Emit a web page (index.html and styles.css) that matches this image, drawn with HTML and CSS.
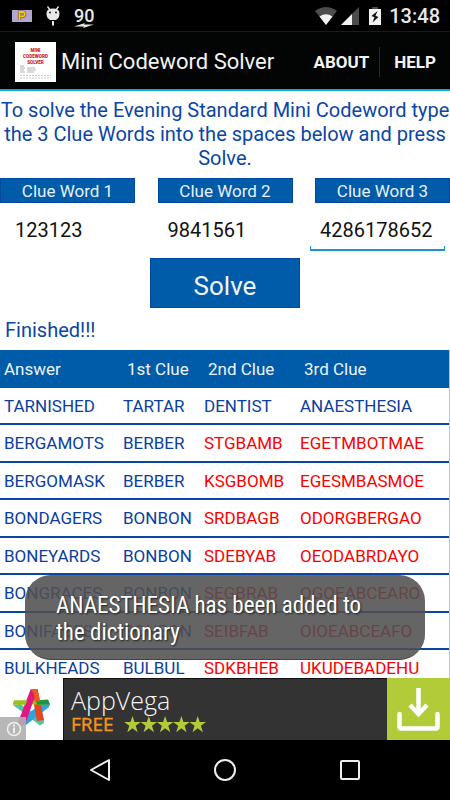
FILE: index.html
```html
<!DOCTYPE html>
<html lang="en">
<head>
<meta charset="utf-8">
<meta name="viewport" content="width=device-width, initial-scale=1">
<title>Mini Codeword Solver</title>
<link rel="stylesheet" href="styles.css">
</head>
<body>
<div class="screen">
  <div class="status">
    <div class="status-group">
      <svg class="ic-p" width="20" height="12" viewBox="0 0 20 12"><rect width="20" height="12" fill="#b3a5cf"/><path d="M7.500 10V2h3.200q2 0 2 2.200t-2 2.200H8.500" fill="none" stroke="#7d5a35" stroke-width="3.200"/><path d="M7.500 10V2h3.200q2 0 2 2.200t-2 2.200H8.500" fill="none" stroke="#f0c818" stroke-width="1.800"/></svg>
      <svg class="ic-bug" width="14" height="20" viewBox="0 0 14 20"><path d="M1.500 .5L4 4M12.500 .5L10 4" stroke="#e8e8e8" stroke-width="1.300"/><path d="M.5 7.500Q.5 2.500 7 2.500t6.500 5Q13.500 12 10 14H4Q.5 12 .5 7.500z" fill="#e8e8e8"/><path d="M7 15v4.500" stroke="#e8e8e8" stroke-width="2"/><circle cx="4" cy="6.500" r="1" fill="#222"/><circle cx="10" cy="6.500" r="1" fill="#222"/></svg>
      <span class="percent">90<svg width="20" height="5" viewBox="0 0 20 5"><path d="M0 3.500L11 0l-1 1.500h10L9 5l1-1.500z" fill="#e8e8e8"/></svg></span>
    </div>
    <div class="status-group">
      <svg width="22" height="18" viewBox="0 0 22 18"><path d="M0 4Q11-4 22 4L11 18z" fill="#4c4c4c"/><path d="M4.500 9.500Q11 5 17.500 9.500L11 18z" fill="#f2f2f2"/></svg>
      <svg class="ic-cell" width="18" height="18" viewBox="0 0 18 18"><path d="M18 0v18H0z" fill="#4c4c4c"/><path d="M11 7v11H0z" fill="#f2f2f2"/></svg>
      <svg class="ic-batt" width="12" height="18" viewBox="0 0 12 18"><path d="M3 0h6v2H3z" fill="#4c4c4c"/><path d="M0 2h12v16H0z" fill="#f2f2f2"/><path d="M8.500 4L2.500 9l3 1.300L3.500 15.500l6-5.500-3-1.200z" fill="#111"/></svg>
      <span class="clock">13:48</span>
    </div>
  </div>

  <header class="bar">
    <svg class="logo" width="41" height="40" viewBox="0 0 41 40"><rect width="41" height="40" fill="#fff"/><g fill="#c8202a" font-family="Roboto, sans-serif" font-weight="900" font-size="4.600" text-anchor="middle"><text x="20.500" y="9.500">MINI</text><text x="20.500" y="15.500">CODEWORD</text><text x="20.500" y="21.700">SOLVER</text></g><path d="M5 24h4M5 26h5M12 26h8M5 28h4M12 28h9M5 30h5M12 30h7" stroke="#aaa" stroke-width=".9"/><path d="M5 33.500h31M5 36h31" stroke="#bbb" stroke-width=".8" stroke-dasharray="2 1"/></svg>
    <h1>Mini Codeword Solver</h1>
    <nav class="menu"><button type="button">ABOUT</button><button type="button">HELP</button></nav>
  </header>

  <main>
    <form class="solver">
      <p class="intro">To solve the Evening Standard Mini Codeword type the 3 Clue Words into the spaces below and press Solve.</p>
      <div class="labels">
        <label for="c1">Clue Word 1</label><label for="c2">Clue Word 2</label><label for="c3">Clue Word 3</label>
      </div>
      <div class="fields">
        <input id="c1" value="123123"><input id="c2" value="9841561"><span class="focused"><input id="c3" value="4286178652"></span>
      </div>
      <button class="solve" type="button">Solve</button>
      <output class="result">Finished!!!</output>
    </form>
    <table>
      <thead><tr><th class="c-answer">Answer</th><th class="c-first">1st Clue</th><th class="c-second">2nd Clue</th><th>3rd Clue</th></tr></thead>
      <tbody>
        <tr class="hit"><td>TARNISHED</td><td>TARTAR</td><td>DENTIST</td><td>ANAESTHESIA</td></tr>
        <tr><td>BERGAMOTS</td><td>BERBER</td><td>STGBAMB</td><td>EGETMBOTMAE</td></tr>
        <tr><td>BERGOMASK</td><td>BERBER</td><td>KSGBOMB</td><td>EGESMBASMOE</td></tr>
        <tr><td>BONDAGERS</td><td>BONBON</td><td>SRDBAGB</td><td>ODORGBERGAO</td></tr>
        <tr><td>BONEYARDS</td><td>BONBON</td><td>SDEBYAB</td><td>OEODABRDAYO</td></tr>
        <tr><td>BONGRACES</td><td>BONBON</td><td>SEGBRAB</td><td>OGOEABCEARO</td></tr>
        <tr><td>BONIFACES</td><td>BONBON</td><td>SEIBFAB</td><td>OIOEABCEAFO</td></tr>
        <tr><td>BULKHEADS</td><td>BULBUL</td><td>SDKBHEB</td><td>UKUDEBADEHU</td></tr>
      </tbody>
    </table>
    <div class="toast" role="status">ANAESTHESIA has been added to the dictionary</div>
  </main>

  <a class="ad" href="#">
    <span class="ad-logo">
      <svg width="40" height="40" viewBox="0 0 40 40"><path d="M2 17l7-1 24 15v4l-4 2.500z" fill="#5bbfa9"/><path d="M34 13l5 3-1 3L15 37l-6-2 2-5z" fill="#2ea3dc"/><path d="M20 1h6.500L33 32l-7 1z" fill="#e6451f"/><path d="M3 12.500h34l2 4H2z" fill="#97c31c"/><path d="M25 12.500l12-1 2 5H26z" fill="#1e9447"/><path d="M19.500 1.500L25 5 14 37l-5 .5-2-3z" fill="#e0187f"/><path d="M19.500 1h7l2.500 12-5 1-1-8z" fill="#ec5a1c"/><path d="M3 12.500h13l-1 4H2z" fill="#97c31c"/></svg>
      <svg class="info" width="26" height="23" viewBox="0 0 26 23"><rect width="26" height="23" fill="#b0b0b0"/><circle cx="14" cy="12" r="6.500" fill="none" stroke="#eee" stroke-width="1.500"/><path d="M14 10.500v5.500M14 7.500v2" stroke="#eee" stroke-width="2"/></svg>
    </span>
    <span class="ad-text">
      <span class="ad-title">AppVega</span>
      <span class="ad-sub">FREE
        <svg width="82" height="17" viewBox="0 0 82 17" fill="#b2cc39"><defs><path id="star" d="M8.500 0l2 6h6.300l-5.100 3.800 2 6.400-5.200-3.900-5.200 3.900 2-6.400L.2 6h6.300z"/></defs><use href="#star"/><use href="#star" x="16.300"/><use href="#star" x="32.600"/><use href="#star" x="48.900"/><use href="#star" x="65.200"/></svg>
      </span>
    </span>
    <span class="ad-get">
      <svg width="43" height="43" viewBox="0 0 43 43" fill="none" stroke="#fff"><path d="M2.500 26V38.500q0 2 2 2h34q2 0 2-2V26" stroke-width="4.500" stroke-linecap="round"/><path d="M21.500 0v25" stroke-width="4.500"/><path d="M13 17l8.500 9L30 17" stroke-width="4.500"/></svg>
    </span>
  </a>

  <nav class="navbar">
    <button type="button" aria-label="Back"><svg width="24" height="26" viewBox="0 0 24 26"><path d="M3 13L21 3v20z"/></svg></button>
    <button type="button" aria-label="Home"><svg width="24" height="26" viewBox="0 0 24 26"><circle cx="12" cy="13" r="10"/></svg></button>
    <button type="button" aria-label="Recents"><svg width="24" height="26" viewBox="0 0 24 26"><rect x="3" y="4" width="18" height="18" rx="1"/></svg></button>
  </nav>
</div>
</body>
</html>
```
FILE: styles.css
```css
* { box-sizing: border-box; }
body { margin: 0; background: #fff; font-family: Roboto, sans-serif; }
button, input { font: inherit; }
button { border: 0; padding: 0; background: none; color: inherit; }
svg { display: block; flex: none; }

.screen { height: 100vh; display: flex; flex-direction: column; overflow: hidden; }

.status { display: flex; justify-content: space-between; flex: none; height: 32px; padding: 0 10px 0 12px; background: #000; border-bottom: 1px solid #1c1c1c; color: #e8e8e8; }
.status-group { display: flex; align-items: center; }
.ic-bug { margin: 0 14px; }
.percent { padding-top: 4px; font-size: 18px; line-height: 15px; font-weight: 500; }
.ic-cell { margin: 0 10px 0 4px; }
.clock { margin-left: 8px; font-size: 20px; line-height: 32px; font-weight: 500; }

.bar { display: flex; align-items: center; flex: none; height: 59px; padding: 2px 14px 0 15px; background: #030505; border-bottom: 2px solid #0aa9e0; color: #f3f3f3; }
.bar h1 { margin: 0 0 0 5px; flex: 1; font-size: 22px; font-weight: 400; white-space: nowrap; }
.menu { display: flex; font-size: 17px; font-weight: 700; }
.menu button { height: 30px; }
.menu button + button { margin-left: 10px; padding-left: 14px; border-left: 1px solid #2b2d2d; }

main { position: relative; flex: 1; min-height: 0; overflow: hidden; }
.solver { display: flex; flex-direction: column; }
.intro { margin: 7px 0 8px; color: #0a46a5; font-size: 20px; line-height: 24px; text-align: center; }
.labels { display: grid; grid-template-columns: repeat(3, 1fr); column-gap: 5%; }
.labels label { height: 25px; background: #005ba9; border: 1px solid #0048a4; color: #e9f0fa; font-size: 17px; line-height: 24px; text-align: center; }
.fields { display: grid; grid-template-columns: repeat(3, 1fr); column-gap: 4%; padding: 0 5px; height: 48px; }
.fields input { width: 100%; height: 48px; padding: 6px 10px 0; border: 0; outline: 0; background: none; color: #111; font-size: 20px; }
.focused { height: 48px; background: linear-gradient(#1f93cf, #1f93cf) bottom / 100% 2px no-repeat, linear-gradient(#1f93cf, #1f93cf) left bottom / 1px 5px no-repeat, linear-gradient(#1f93cf, #1f93cf) right bottom / 1px 5px no-repeat; }
.solve { align-self: center; width: 33.333%; height: 50px; margin-top: 7px; padding-top: 6px; background: #005ba9; border: 1px solid #0048a4; color: #f0f5fc; font-size: 26px; }
.result { padding: 10px 5px 8px; color: #0a46a5; font-size: 20px; line-height: 24px; }

table { width: 100%; border-collapse: separate; border-spacing: 0; table-layout: fixed; border-right: 1px solid #b5c3e4; color: #0a3ea0; font-size: 17px; }
.c-answer { width: 119px; }
.c-first { width: 81px; }
.c-second { width: 96px; }
tr { height: 37px; }
tbody tr:nth-child(even), thead tr { height: 38px; }
th, td { padding: 0 0 0 4px; text-align: left; font-weight: 400; white-space: nowrap; }
td { border-bottom: 2px solid #0a46a5; }
th { background: #005ba9; color: #eef3fb; }
th + th { padding-left: 8px; }
tr:not(.hit) td:nth-child(n+3) { color: #fb0000; }

.toast { position: absolute; left: 25px; right: 25px; bottom: 18px; padding: 17px 40px 13px 31px; border-radius: 26px; background: rgba(80, 80, 80, .88); border-bottom: 1px solid #444; color: #fff; font-family: "Roboto Condensed", Roboto, sans-serif; font-size: 23px; line-height: 27px; text-shadow: 1px 1px 2px #222; }

.ad { display: flex; flex: none; height: 62px; background: #333; text-decoration: none; font-family: "Open Sans", sans-serif; }
.ad-logo { position: relative; display: flex; width: 63px; padding: 10px 11px; background: #fff; }
.info { position: absolute; left: 0; bottom: 0; opacity: .9; }
.ad-text { flex: 1; padding: 5px 7px 0; border-top: 1px solid #111; border-left: 1px solid #111; }
.ad-title { display: block; color: #f5f5f5; font-size: 25px; font-weight: 300; line-height: 32px; }
.ad-sub { display: flex; gap: 10px; color: #f7941d; font-size: 19px; line-height: 17px; -webkit-text-stroke: thin #f7941d; }
.ad-get { display: flex; align-items: center; justify-content: center; width: 63px; background: #b2cc39; }

.navbar { display: flex; flex: none; justify-content: center; align-items: center; gap: 101px; height: 60px; background: #000; }
.navbar svg { fill: none; stroke: #eee; stroke-width: 2; stroke-linejoin: round; }
```
